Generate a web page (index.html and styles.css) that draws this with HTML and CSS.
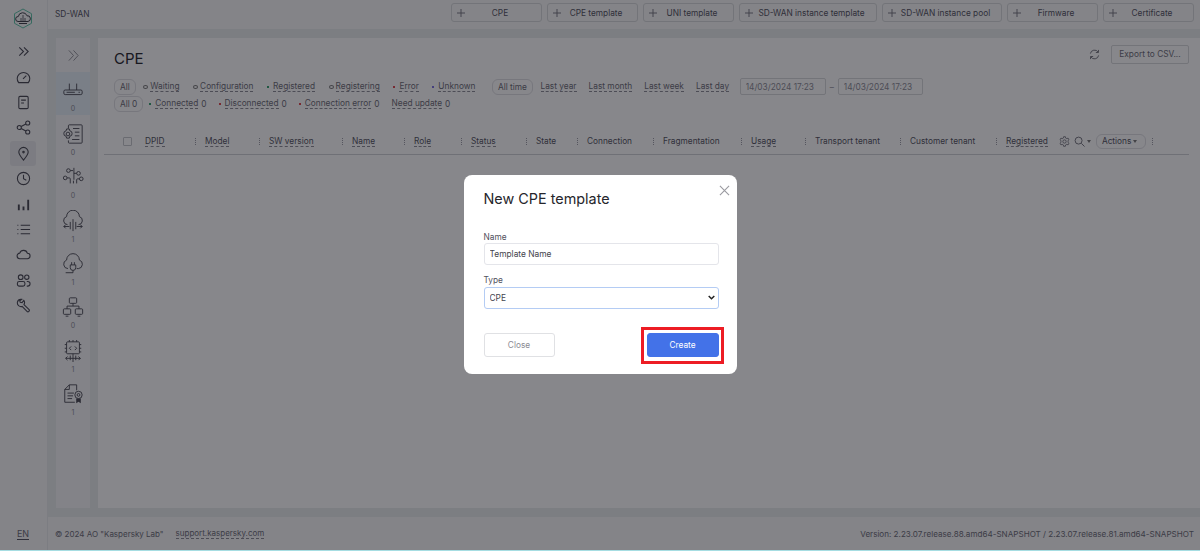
FILE: index.html
```html
<!DOCTYPE html>
<html lang="en">
<head>
<meta charset="utf-8">
<title>SD-WAN</title>
<link rel="stylesheet" href="styles.css">
</head>
<body>
<div class="app">
  <nav class="rail">
    <svg class="logo" width="20" height="21" viewBox="0 0 20 21" fill="none"><path d="M10 1l8.500 4.700v9.600L10 20l-8.500-4.700V5.700z" stroke="#5fc4a8" stroke-width="1"/><path d="M5 13.500a2.500 2.500 0 0 1 .3-5A4.500 4.500 0 0 1 14 7.800a2.800 2.800 0 0 1 1 5.700z" stroke="#3c3c46" stroke-width="1"/><path d="M10 7v6M8 10v3M12 10v3" stroke="#3c3c46" stroke-width=".8"/><path d="M6 15.500h8" stroke="#3c3c46"/></svg>
    <div class="rail-list">
      <a class="rail-item"><svg class="ic" viewBox="0 0 16 16"><path d="M3.500 3.500L8 8l-4.500 4.500M8.500 3.500L13 8l-4.500 4.500"/></svg></a>
      <a class="rail-item"><svg class="ic" viewBox="0 0 16 16"><path d="M2.800 13.500a6.700 6.700 0 1 1 10.400 0zM7.500 9.500l3.500-3.500"/></svg></a>
      <a class="rail-item"><svg class="ic" viewBox="0 0 16 16"><rect x="3" y="1.500" width="10" height="13" rx="1.300"/><path d="M5.500 5.500h5M5.500 8.500h3"/></svg></a>
      <a class="rail-item"><svg class="ic" viewBox="0 0 16 16"><circle cx="3.500" cy="8" r="2.200"/><circle cx="12.500" cy="3.200" r="2.200"/><circle cx="12.500" cy="12.800" r="2.200"/><path d="M5.500 7l5-2.800M5.500 9l5 2.800"/></svg></a>
      <a class="rail-item is-active"><svg class="ic" viewBox="0 0 16 16"><path d="M8 15C5 11.500 3 9.300 3 6.500a5 5 0 0 1 10 0C13 9.300 11 11.500 8 15z"/><circle cx="8" cy="6.500" r=".8"/></svg></a>
      <a class="rail-item"><svg class="ic" viewBox="0 0 16 16"><circle cx="8" cy="8" r="6.500"/><path d="M8 4v4.300l3 1.500"/></svg></a>
      <a class="rail-item"><svg class="ic ic-bold" viewBox="0 0 16 16"><path d="M3 14V8M8 14v-4M13 14V3"/></svg></a>
      <a class="rail-item"><svg class="ic" viewBox="0 0 16 16"><path d="M5 3.500h10M5 8h10M5 12.500h10M1.500 3.500h1M1.500 8h1M1.500 12.500h1"/></svg></a>
      <a class="rail-item"><svg class="ic" viewBox="0 0 16 16"><path d="M4.300 12.500a3 3 0 0 1-.3-6 4.300 4.300 0 0 1 8.200.2 2.900 2.900 0 0 1-.2 5.800z"/></svg></a>
      <a class="rail-item"><svg class="ic" viewBox="0 0 16 16"><circle cx="5" cy="4.500" r="2.500"/><circle cx="11.500" cy="4.500" r="2.300"/><rect x="1.500" y="9" width="8" height="5" rx="2"/><path d="M11.500 9h1a2.500 2.500 0 0 1 0 5h-1"/></svg></a>
      <a class="rail-item"><svg class="ic" viewBox="0 0 16 16"><path d="M6 1.500a4 4 0 0 0-4.500 3 4 4 0 0 0 5 4.500l5.500 5.500c1 1 3-1 2-2L8.500 7a4 4 0 0 0-.2-4.500L6.500 5 4.500 4.500 4 3z"/></svg></a>
    </div>
    <a class="lang">EN</a>
  </nav>

  <div class="page">
    <header class="topbar">
      <span class="crumb">SD-WAN</span>
      <div class="tabs">
        <a class="tab"><svg class="plus" viewBox="0 0 9 9"><path d="M4.500 0v9M0 4.500h9"/></svg><span>CPE</span></a>
        <a class="tab"><svg class="plus" viewBox="0 0 9 9"><path d="M4.500 0v9M0 4.500h9"/></svg><span>CPE template</span></a>
        <a class="tab"><svg class="plus" viewBox="0 0 9 9"><path d="M4.500 0v9M0 4.500h9"/></svg><span>UNI template</span></a>
        <a class="tab tab-wide"><svg class="plus" viewBox="0 0 9 9"><path d="M4.500 0v9M0 4.500h9"/></svg><span>SD-WAN instance template</span></a>
        <a class="tab tab-pool"><svg class="plus" viewBox="0 0 9 9"><path d="M4.500 0v9M0 4.500h9"/></svg><span>SD-WAN instance pool</span></a>
        <a class="tab"><svg class="plus" viewBox="0 0 9 9"><path d="M4.500 0v9M0 4.500h9"/></svg><span>Firmware</span></a>
        <a class="tab"><svg class="plus" viewBox="0 0 9 9"><path d="M4.500 0v9M0 4.500h9"/></svg><span>Certificate</span></a>
      </div>
    </header>

    <div class="workspace">
      <aside class="subnav">
        <div class="subnav-head"><svg class="chev" viewBox="0 0 14 14"><path d="M2 1.500L7 7l-5 5.500M7 1.500L12 7l-5 5.500"/></svg></div>
        <a class="sub-item is-active">
          <svg class="sub-ic" viewBox="0 0 24 24"><rect x="2" y="12" width="20" height="5" rx="1.500"/><path d="M8 5v7M16 5v7M5 14.500h9M18 14.500h1.500"/></svg>
          <span class="count">0</span>
        </a>
        <a class="sub-item">
          <svg class="sub-ic" viewBox="0 0 24 24"><path d="M7 6V3a1 1 0 0 1 1-1h13a1 1 0 0 1 1 1v18a1 1 0 0 1-1 1H8a1 1 0 0 1-1-1v-2M12 6h7M14 10h5M14 14h5M11 18h8"/><circle cx="6.500" cy="12" r="2"/><path d="M5 6.500h3l.5 2 2 1 .5 2-.5 2-2 1-.5 2H5l-.5-2-2-1-.5-2 .5-2 2-1z"/></svg>
          <span class="count">0</span>
        </a>
        <a class="sub-item">
          <svg class="sub-ic" viewBox="0 0 24 24"><circle cx="7" cy="5" r="2"/><circle cx="18" cy="8" r="2"/><circle cx="3.500" cy="13" r="2"/><circle cx="21" cy="14" r="2"/><path d="M9 5h3M13 2v13M16 8h-3M5.500 13H8a1 1 0 0 1 1 1v5M19 14h-2a1 1 0 0 0-1 1v4M12.500 19v-3"/></svg>
          <span class="count">0</span>
        </a>
        <a class="sub-item">
          <svg class="sub-ic" viewBox="0 0 24 24"><path d="M6 16a4.500 4.500 0 0 1-1-8.800 7 7 0 0 1 14 0 4.500 4.500 0 0 1-1 8.800M12 10v13M9 13v8M15 13v8M2 18h6M16 18h6M4 16l-2 2 2 2M20 16l2 2-2 2"/></svg>
          <span class="count">1</span>
        </a>
        <a class="sub-item">
          <svg class="sub-ic" viewBox="0 0 24 24"><path d="M6.500 17a4.800 4.800 0 0 1-1.500-9.300 7 7 0 0 1 14 0A4.800 4.800 0 0 1 18 17h-2M9 13h6v3a3 3 0 0 1-6 0zM10.500 10v3M13.500 10v3M12 19v2.500H4"/></svg>
          <span class="count">1</span>
        </a>
        <a class="sub-item">
          <svg class="sub-ic" viewBox="0 0 24 24"><rect x="8" y="2" width="8" height="6" rx="1"/><rect x="1.500" y="14" width="8" height="6" rx="1"/><rect x="14.500" y="14" width="8" height="6" rx="1"/><path d="M12 8v3M5.500 14v-3h13v3M4 22h3M17 22h3"/></svg>
          <span class="count">0</span>
        </a>
        <a class="sub-item">
          <svg class="sub-ic" viewBox="0 0 24 24"><rect x="5" y="2" width="14" height="13" rx="1"/><path d="M8 0v2M12 0v2M16 0v2M3 5h2M3 9h2M3 13h2M19 5h2M19 9h2M19 13h2M10 7l-2 2 2 2M14 7l2 2-2 2M12 15v9M9 17v5M15 17v5M4 20h16M6 18l-2 2 2 2M18 18l2 2-2 2"/></svg>
          <span class="count">1</span>
        </a>
        <a class="sub-item">
          <svg class="sub-ic" viewBox="0 0 24 24"><path d="M14 21H3V7l5-5h8v6M3 7h5V2M6 11h7M6 14h6M6 17h5"/><circle cx="18" cy="13" r="4"/><circle cx="18" cy="13" r="1.500"/><path class="solid" d="M15.500 17h5v5l-2.500-1.500-2.500 1.500z"/></svg>
          <span class="count">1</span>
        </a>
      </aside>

      <main class="content">
        <div class="content-head">
          <h1 class="title">CPE</h1>
          <div class="head-tools">
            <svg class="refresh" viewBox="0 0 12 12"><path d="M1.500 5A4.600 4.600 0 0 1 10 3.500M10.500 7A4.600 4.600 0 0 1 2 8.500M10.300 1v2.800H7.500M1.700 11V8.200h2.800"/></svg>
            <a class="btn-export">Export to CSV...</a>
          </div>
        </div>

        <div class="filters">
          <div class="filter-row">
            <a class="pill">All</a>
            <a class="flt"><i class="dot hollow"></i><span class="u">Waiting</span></a>
            <a class="flt"><i class="dot hollow"></i><span class="u">Configuration</span></a>
            <a class="flt"><i class="dot green"></i><span class="u">Registered</span></a>
            <a class="flt"><i class="dot hollow"></i><span class="u">Registering</span></a>
            <a class="flt"><i class="dot red"></i><span class="u">Error</span></a>
            <a class="flt flt-last"><i class="dot violet"></i><span class="u">Unknown</span></a>
            <a class="pill">All time</a>
            <a class="flt"><span class="u">Last year</span></a>
            <a class="flt flt-time"><span class="u">Last month</span></a>
            <a class="flt flt-time"><span class="u">Last week</span></a>
            <a class="flt flt-time"><span class="u">Last day</span></a>
            <span class="date-range"><input class="date" value="14/03/2024 17:23"><span class="dash">–</span><input class="date" value="14/03/2024 17:23"></span>
          </div>
          <div class="filter-row filter-row-tight">
            <a class="pill">All 0</a>
            <a class="flt"><i class="dot green"></i><span class="u">Connected</span> <span>0</span></a>
            <a class="flt"><i class="dot red"></i><span class="u">Disconnected</span> <span>0</span></a>
            <a class="flt"><i class="dot red"></i><span class="u">Connection error</span> <span>0</span></a>
            <a class="flt"><span class="u">Need update</span> <span>0</span></a>
          </div>
        </div>

        <div class="table-head">
          <span class="check-cell"><i class="check"></i></span>
          <span class="th"><span class="u">DPID</span><i class="sep"></i></span>
          <span class="th"><span class="u">Model</span><i class="sep"></i></span>
          <span class="th"><span class="u">SW version</span><i class="sep"></i></span>
          <span class="th"><span class="u">Name</span><i class="sep"></i></span>
          <span class="th"><span class="u">Role</span><i class="sep"></i></span>
          <span class="th"><span class="u">Status</span><i class="sep"></i></span>
          <span class="th"><span>State</span><i class="sep"></i></span>
          <span class="th"><span>Connection</span><i class="sep"></i></span>
          <span class="th"><span>Fragmentation</span><i class="sep"></i></span>
          <span class="th"><span class="u">Usage</span><i class="sep"></i></span>
          <span class="th"><span>Transport tenant</span><i class="sep"></i></span>
          <span class="th"><span>Customer tenant</span><i class="sep"></i></span>
          <span class="th th-last">
            <span class="u">Registered</span>
            <svg class="gear" viewBox="0 0 12 12"><circle cx="6" cy="6" r="1.800"/><path d="M5 .8h2l.3 1.500 1.200.6 1.400-.6 1 1.700-1.100 1 .1 1-.1 1 1.100 1-1 1.700-1.400-.6-1.200.6L7 11.200H5l-.3-1.500-1.200-.6-1.400.6-1-1.700 1.100-1-.1-1 .1-1-1.100-1 1-1.700 1.400.6 1.200-.6z"/></svg>
            <svg class="search" viewBox="0 0 12 12"><circle cx="5" cy="5" r="3.800"/><path d="M8 8l3.500 3.500"/></svg><i class="caret"></i>
            <a class="pill pill-actions">Actions<i class="caret"></i></a>
            <i class="sep"></i>
          </span>
        </div>
      </main>
    </div>

    <footer class="footer">
      <span class="copy">© 2024 AO "Kaspersky Lab"</span>
      <a class="u support">support.kaspersky.com</a>
      <span class="version">Version: 2.23.07.release.88.amd64-SNAPSHOT / 2.23.07.release.81.amd64-SNAPSHOT</span>
    </footer>
  </div>
</div>

<div class="overlay">
  <section class="modal">
    <button class="modal-x" aria-label="Close"><svg viewBox="0 0 12 12"><path d="M1 1l10 10M11 1L1 11"/></svg></button>
    <h2 class="modal-title">New CPE template</h2>
    <label class="field">
      <span class="field-label field-label-first">Name</span>
      <input class="control" value="Template Name">
    </label>
    <label class="field field-type">
      <span class="field-label">Type</span>
      <span class="select-wrap">
        <select class="control control-focus"><option>CPE</option></select>
        <svg class="select-arrow" viewBox="0 0 7 5"><path d="M.7 1l2.800 2.700L6.300 1"/></svg>
      </span>
    </label>
    <div class="modal-actions">
      <button class="btn btn-close">Close</button>
      <span class="annot"><button class="btn btn-primary">Create</button></span>
    </div>
  </section>
</div>
</body>
</html>
```

FILE: styles.css
```css
* { box-sizing: border-box; }
html, body { margin: 0; height: 551px; overflow: hidden; }
body {
  background: #a6dde2;
  font-family: Inter, "Liberation Sans", sans-serif;
  font-size: 8.300px;
  color: #6a6a74;
  -webkit-font-smoothing: antialiased;
}
a { color: inherit; text-decoration: none; }

.app { display: flex; height: 550px; background: #f8f8f9; }

/* left rail */
.rail {
  width: 48px;
  flex: none;
  display: flex;
  flex-direction: column;
  align-items: center;
  border-right: 1px solid #e8eaec;
  padding-top: 8px;
  padding-right: 1px;
}
.logo { display: block; }
.rail-list { margin-top: 10px; display: flex; flex-direction: column; align-items: center; }
.rail-item {
  width: 26px;
  height: 25.4px;
  display: flex;
  align-items: center;
  justify-content: center;
  border-radius: 3px;
}
.rail-item.is-active { background: #e8e9ec; }
.ic { width: 15px; height: 15px; fill: none; stroke: #44444f; stroke-width: 1.150; }
.ic-bold { stroke-width: 2; }
.lang {
  margin-top: auto;
  margin-bottom: 10px;
  font-size: 9px;
  color: #6a6a74;
  border-bottom: 1px solid #50505c;
  line-height: 11px;
}

/* page */
.page { flex: 1; min-width: 0; display: flex; flex-direction: column; }
.topbar { height: 29px; flex: none; display: flex; align-items: center; padding-left: 7px; }
.crumb { font-size: 8.300px; color: #50505c; line-height: 1; }
.tabs { margin-left: auto; margin-right: 6px; display: flex; gap: 5px; margin-top: -4px; }
.tab {
  width: 91px;
  height: 19px;
  display: flex;
  align-items: center;
  border: 1px solid #d6d8da;
  border-radius: 3px;
  padding: 0 6px 0 5px;
  color: #50505c;
  white-space: nowrap;
}
.tab span { flex: 1; text-align: center; }
.tab-wide { width: 138px; }
.tab-pool { width: 120px; }
.plus { width: 8px; height: 8px; flex: none; fill: none; stroke: #6a6a74; stroke-width: 1; }

.workspace {
  flex: 1;
  min-height: 0;
  display: flex;
  gap: 8px;
  background: #e8eded;
  padding: 9px 0 9px 8px;
}
.subnav { width: 34px; flex: none; background: #f7f7f8; display: flex; flex-direction: column; }
.subnav-head { height: 34px; display: flex; align-items: center; justify-content: center; }
.chev { width: 13px; height: 13px; fill: none; stroke: #8a8a94; stroke-width: 1; }
.sub-item {
  height: 43.4px;
  flex: none;
  display: flex;
  flex-direction: column;
  align-items: center;
  justify-content: flex-end;
  padding-bottom: 2px;
}
.sub-item.is-active { background: #e4eef6; }
.sub-ic { width: 22px; height: 22px; fill: none; stroke: #44444f; stroke-width: 1; }
.sub-ic .solid { fill: #44444f; stroke: none; }
.count { font-size: 7px; line-height: 9px; margin-top: 3px; color: #8a8a94; }

.content { flex: 1; min-width: 0; background: #fff; padding: 0 11px 0 16px; }
.content-head { height: 40px; display: flex; align-items: center; justify-content: space-between; padding-top: 1px; }
.title { margin: 0; font-size: 15px; font-weight: 400; line-height: 20px; color: #22222a; }
.head-tools { display: flex; align-items: center; gap: 11px; margin-top: -9px; }
.refresh { width: 11px; height: 11px; fill: none; stroke: #6a6a74; stroke-width: 1; }
.btn-export {
  width: 78px;
  height: 19px;
  display: flex;
  align-items: center;
  justify-content: center;
  border: 1px solid #d6d8da;
  border-radius: 2px;
  color: #6a6a74;
}

.filters { display: flex; flex-direction: column; }
.filter-row { display: flex; align-items: center; height: 17px; gap: 13.600px; white-space: nowrap; }
.filter-row-tight { gap: 12px; }
.pill {
  display: inline-flex;
  align-items: center;
  height: 16px;
  padding: 0 5px;
  border: 1px solid #dedee2;
  border-radius: 6px;
  color: #6a6a74;
  margin-right: -6px;
}
.flt { display: inline-flex; align-items: center; gap: 3px; color: #6a6a74; }
.flt-last { margin-right: 3px; }
.flt-time { margin-left: -1.500px; }
.u { border-bottom: 1px dashed #8a8a94; line-height: 10px; }
.dot { width: 2px; height: 2px; flex: none; margin-right: 1px; }
.hollow { width: 5px; height: 4px; margin-right: -1px; border: 1px solid #777; border-radius: 50%; }
.green { background: #32a06e; }
.red { background: #e0444c; }
.violet { background: #7a6ee0; }
.date-range { display: inline-flex; align-items: center; gap: 4px; margin-left: -3px; }
.date {
  width: 86px;
  height: 17px;
  padding: 0 5px;
  border: 1px solid #d6d8da;
  border-radius: 2px;
  background: transparent;
  font: inherit;
  color: #8a8a94;
  outline: none;
}
.date + .dash + .date { width: 85px; }
.dash { color: #8a8a94; }

.table-head {
  margin-top: 18px;
  margin-left: -10px;
  height: 25px;
  padding-bottom: 2px;
  display: grid;
  grid-template-columns: 41px 60px 64px 83px 62px 57px 65px 51px 76px 88px 64px 95px 96px 1fr;
  align-items: center;
  border-bottom: 1px solid #cfd1d4;
  color: #50505c;
}
.check-cell { padding-left: 19px; display: flex; }
.check { width: 9px; height: 9px; border: 1px solid #c4c6ca; border-radius: 1px; }
.th { display: flex; align-items: center; justify-content: space-between; padding-right: 9px; white-space: nowrap; }
.th-last { justify-content: flex-start; padding-right: 0; }
.sep { width: 1px; height: 7px; flex: none; border-left: 1px dotted #9a9aa4; }
.gear { width: 11px; height: 11px; margin-left: 11px; fill: none; stroke: #6a6a74; stroke-width: .9; flex: none; }
.search { width: 11px; height: 11px; margin-left: 4px; fill: none; stroke: #6a6a74; stroke-width: 1; flex: none; }
.caret {
  width: 0;
  height: 0;
  margin-left: 2px;
  border-left: 2.500px solid transparent;
  border-right: 2.500px solid transparent;
  border-top: 3px solid #777;
}
.pill-actions { margin: 0 6px 0 5px; width: 50px; height: 15px; gap: 0; color: #50505c; }

/* footer */
.footer { height: 33px; flex: none; display: flex; align-items: center; padding: 0 6px 0 7px; color: #6a6a74; font-size: 8px; }
.support { margin-left: 12px; }
.version { margin-left: auto; font-size: 8.100px; }

/* modal */
.overlay {
  position: fixed;
  left: 0;
  top: 0;
  right: 0;
  bottom: 2px;
  display: flex;
  align-items: center;
  justify-content: center;
}
.overlay::before {
  content: "";
  position: fixed;
  left: 0;
  top: 0;
  right: 0;
  bottom: 1px;
  background: rgba(16, 16, 24, .5);
}
.modal {
  position: relative;
  width: 273px;
  height: 199px;
  background: #fff;
  border-radius: 8px;
  padding: 14px 19px 0 20px;
}
.modal-x {
  position: absolute;
  top: 10px;
  right: 7px;
  width: 11px;
  height: 11px;
  padding: 0;
  border: 0;
  background: none;
  display: flex;
}
.modal-x svg { width: 11px; height: 11px; fill: none; stroke: #9a9aa0; stroke-width: 1.200; }
.modal-title { margin: 0 0 22px; font-size: 14.400px; line-height: 20px; font-weight: 400; color: #26262c; }
.field { display: block; }
.field-type { margin-top: 9px; }
.field-label { display: block; font-size: 8.300px; line-height: 12px; margin-bottom: 1px; color: #50505c; }
.field-label-first { margin-bottom: 0; }
.control {
  display: block;
  width: 235px;
  height: 22px;
  padding: 0 5px;
  border: 1px solid #e4e5ea;
  border-radius: 3px;
  background: #fff;
  font: inherit;
  font-size: 8.400px;
  color: #44444c;
  outline: none;
}
.select-wrap { display: block; position: relative; width: 235px; }
.control-focus { border-color: #b4ccf4; appearance: none; }
.select-arrow {
  position: absolute;
  right: 4px;
  top: 8px;
  width: 7px;
  height: 5px;
  fill: none;
  stroke: #222;
  stroke-width: 1.500;
}
.modal-actions { margin-top: 18px; display: flex; justify-content: space-between; align-items: flex-start; }
.btn {
  width: 71px;
  height: 24px;
  border: 1px solid #e0e1e4;
  border-radius: 3px;
  background: #fff;
  font: inherit;
  color: #8a8a92;
  padding: 0;
}
.btn-close { margin-top: 6px; }
.btn-primary { width: 72px; display: block; background: #4372e8; border-color: #4372e8; color: #fff; }
.annot { display: block; border: 3px solid #ed1c24; padding: 3px 2px 4px 3px; margin-right: -6px; }
```
